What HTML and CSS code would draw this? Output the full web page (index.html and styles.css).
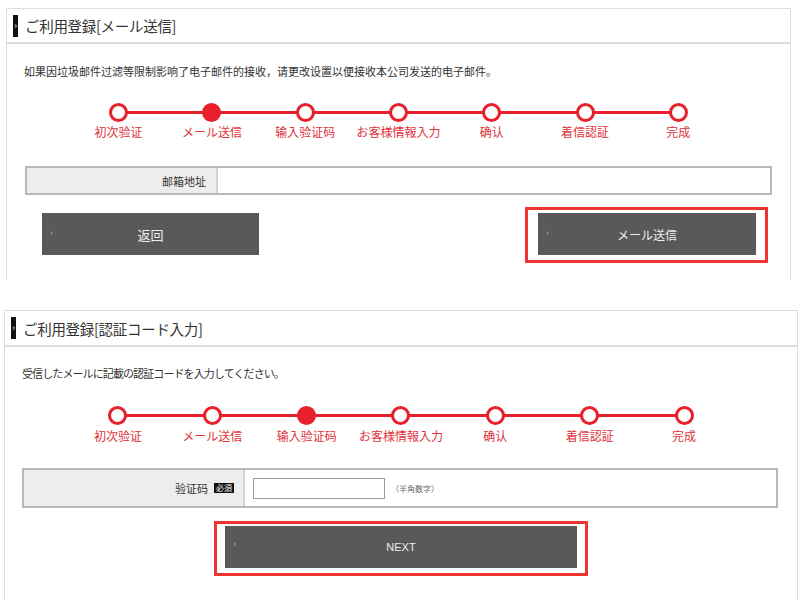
FILE: index.html
```html
<!DOCTYPE html>
<html lang="ja">
<head>
    <meta charset="UTF-8">
    <meta name="viewport" content="width=device-width, initial-scale=1.0">
    <title>ご利用登録</title>
    <link rel="stylesheet" href="styles.css">
</head>
<body>
    <section class="panel panel-mail">
        <div class="panel-head">
            <span class="head-mark">›</span>
            <h2>ご利用登録[メール送信]</h2>
        </div>
        <p class="lead">如果因垃圾邮件过滤等限制影响了电子邮件的接收，请更改设置以便接收本公司发送的电子邮件。</p>
        <ol class="steps">
            <li class="step"><span class="dot"></span><span class="step-name">初次验证</span></li>
            <li class="step active"><span class="dot"></span><span class="step-name">メール送信</span></li>
            <li class="step"><span class="dot"></span><span class="step-name">输入验证码</span></li>
            <li class="step"><span class="dot"></span><span class="step-name">お客様情報入力</span></li>
            <li class="step"><span class="dot"></span><span class="step-name">确认</span></li>
            <li class="step"><span class="dot"></span><span class="step-name">着信認証</span></li>
            <li class="step"><span class="dot"></span><span class="step-name">完成</span></li>
        </ol>
        <div class="field">
            <div class="field-label">邮箱地址</div>
            <div class="field-value"></div>
        </div>
        <div class="actions">
            <a class="btn btn-back">返回</a>
            <div class="highlight">
                <a class="btn">メール送信</a>
            </div>
        </div>
    </section>

    <section class="panel panel-code">
        <div class="panel-head">
            <span class="head-mark">›</span>
            <h2>ご利用登録[認証コード入力]</h2>
        </div>
        <p class="lead">受信したメールに記載の認証コードを入力してください。</p>
        <ol class="steps">
            <li class="step"><span class="dot"></span><span class="step-name">初次验证</span></li>
            <li class="step"><span class="dot"></span><span class="step-name">メール送信</span></li>
            <li class="step active"><span class="dot"></span><span class="step-name">输入验证码</span></li>
            <li class="step"><span class="dot"></span><span class="step-name">お客様情報入力</span></li>
            <li class="step"><span class="dot"></span><span class="step-name">确认</span></li>
            <li class="step"><span class="dot"></span><span class="step-name">着信認証</span></li>
            <li class="step"><span class="dot"></span><span class="step-name">完成</span></li>
        </ol>
        <div class="field">
            <div class="field-label">验证码 <span class="required">必須</span></div>
            <div class="field-value">
                <input type="text" class="code-input">
                <span class="note">（半角数字）</span>
            </div>
        </div>
        <div class="actions">
            <div class="highlight">
                <a class="btn btn-next">NEXT</a>
            </div>
        </div>
    </section>
</body>
</html>
```

FILE: styles.css
```css
body {
    margin: 0;
    padding-top: 8px;
    background: #fff;
    font-family: "Noto Sans CJK JP", "Noto Sans CJK SC", sans-serif;
    color: #333;
}
.panel {
    box-sizing: border-box;
    border: 1px solid #ddd;
    border-bottom: none;
    background: #fff;
}
.panel-mail {
    margin-left: 6px;
    width: 785px;
    height: 271px;
}
.panel-code {
    margin-top: 31px;
    margin-left: 4px;
    width: 794px;
    height: 300px;
}
.panel-head {
    display: flex;
    align-items: center;
    height: 33px;
    border-bottom: 2px solid #ddd;
    padding-left: 6px;
}
.panel-code .panel-head {
    height: 34px;
}
.head-mark {
    width: 5px;
    height: 22px;
    background: #111;
    color: #fff;
    font-size: 9px;
    line-height: 22px;
    text-align: center;
    overflow: hidden;
}
.panel-head h2 {
    margin: 0 0 0 7px;
    font-size: 14.5px;
    font-weight: normal;
    color: #333;
    letter-spacing: -0.3px;
}
.lead {
    margin: 19px 0 0 17px;
    font-size: 11px;
    line-height: 16px;
}
.panel-code .lead {
    margin-top: 18px;
    letter-spacing: -0.9px;
}
.steps {
    list-style: none;
    padding: 0;
    margin: 24px auto 0;
    width: 83.4%;
    display: grid;
    grid-template-columns: repeat(7, 1fr);
    position: relative;
}
.panel-code .steps {
    margin-top: 25px;
}
.steps::before {
    content: "";
    position: absolute;
    top: 8px;
    left: calc(100% / 14);
    right: calc(100% / 14);
    height: 3px;
    background: #e8202b;
}
.step {
    display: flex;
    flex-direction: column;
    align-items: center;
}
.dot {
    box-sizing: border-box;
    width: 19px;
    height: 19px;
    border: 3px solid #e8202b;
    border-radius: 50%;
    background: #fff;
    position: relative;
}
.step.active .dot {
    background: #e8202b;
}
.step-name {
    margin-top: 2px;
    font-size: 12px;
    line-height: 16px;
    color: #e0323b;
    white-space: nowrap;
}
.panel-code .step-name {
    margin-top: 3px;
}
.field {
    box-sizing: border-box;
    display: flex;
    margin: 26px 18px 0 18px;
    height: 29px;
    border: 2px solid #b8b8b8;
}
.panel-code .field {
    margin: 24px 19px 0 17px;
    height: 40px;
}
.field-label {
    box-sizing: border-box;
    width: 191px;
    background: #ededed;
    border-right: 2px solid #d2d2d2;
    display: flex;
    align-items: center;
    justify-content: flex-end;
    padding-right: 10px;
    font-size: 11px;
}
.panel-code .field-label {
    width: 221px;
    padding-right: 9px;
}
.required {
    margin-left: 6px;
    background: #111;
    color: #fff;
    font-size: 8px;
    line-height: 10px;
    padding: 0 2px;
}
.field-value {
    flex: 1;
    display: flex;
    align-items: center;
    padding-left: 8px;
}
.code-input {
    box-sizing: border-box;
    width: 132px;
    height: 21px;
    margin: 0;
    border: 1px solid #999;
    padding: 0 4px;
}
.note {
    margin-left: 6px;
    font-size: 8px;
    color: #666;
}
.actions {
    display: flex;
    justify-content: space-between;
    align-items: flex-start;
    margin-top: 12px;
    padding: 0 22px 0 35px;
}
.panel-code .actions {
    justify-content: center;
    margin-top: 13px;
    padding: 0;
}
.highlight {
    border: 3px solid #ee3333;
    padding: 3px 9px 5px 10px;
}
.panel-code .highlight {
    padding: 2px 8px 5px 8px;
}
.btn {
    box-sizing: border-box;
    width: 218px;
    height: 42px;
    background: #595959;
    color: #eee;
    font-size: 12px;
    display: flex;
    align-items: center;
    justify-content: center;
    position: relative;
    cursor: pointer;
}
.btn::before {
    content: "›";
    position: absolute;
    left: 8px;
    top: 13px;
    font-size: 9px;
    color: #bbb;
}
.btn-back {
    margin-top: 6px;
    width: 217px;
    font-size: 13px;
}
.btn-next {
    width: 352px;
    font-family: "Liberation Sans", Arial, sans-serif;
    font-size: 11px;
}
```
